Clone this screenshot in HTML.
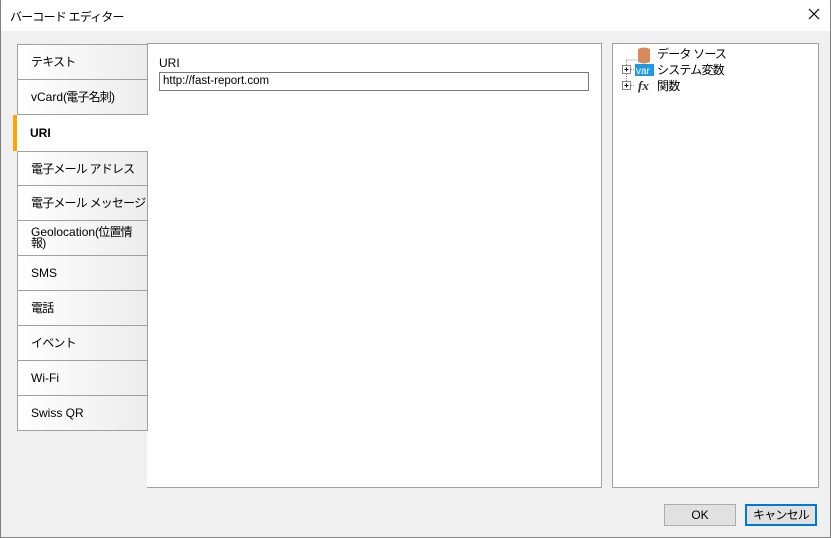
<!DOCTYPE html>
<html><head><meta charset="utf-8"><style>
*{box-sizing:border-box;margin:0;padding:0}
body{width:831px;height:538px;overflow:hidden;background:#f0f0f0;font-family:"Liberation Sans","Noto Sans CJK JP",sans-serif;font-size:12px;color:#000;position:relative}
.j{letter-spacing:-0.8px}
.win{position:absolute;left:0;top:0;width:831px;height:538px;border:1px solid #808080;border-top:1px solid #6e6e6e}
.title{position:absolute;left:1px;top:0;width:829px;height:31px;background:#fff}
.title span{position:absolute;left:9px;top:8px;font-size:12px}
.x{position:absolute;left:806px;top:7px}
.tab{position:absolute;left:17px;width:131px;height:36px;border:1px solid #a0a0a0;background:linear-gradient(to right,#fff,#ececec);padding-left:13px;display:flex;align-items:center;line-height:12px;white-space:nowrap}
.tab.w{white-space:normal}
.tab.sel{background:#fff;border:none;border-left:4px solid #ffa500;left:13px;width:135px;font-weight:bold;padding-left:13px}
.panel{position:absolute;left:147px;top:43px;width:455px;height:445px;background:#fff;border:1px solid #a0a0a0;border-left:none}
.lbl{position:absolute;left:12px;top:12px}
.inp{position:absolute;left:12px;top:28px;width:430px;height:19px;border:1px solid #7a7a7a;padding-left:3px;line-height:17px;font-size:11.5px}
.tree{position:absolute;left:612px;top:43px;width:207px;height:445px;background:#fff;border:1px solid #a0a0a0}
.btn{position:absolute;top:504px;width:72px;height:22px;background:#e1e1e1;border:1px solid #adadad;text-align:center;line-height:20px}
</style></head><body>
<div class="win"></div>
<div class="title"><span class="j">バーコード エディター</span>
<svg class="x" width="14" height="14" viewBox="0 0 14 14"><path d="M2 2L12 12M12 2L2 12" stroke="#000" stroke-width="1.2"/></svg></div>
<div class="panel"><div class="lbl">URI</div><div class="inp">http://fast-report.com</div></div>
<div class="tab j" style="top:44px">テキスト</div>
<div class="tab" style="top:79px">vCard<span class="j">(電子名刺)</span></div>
<div class="tab sel" style="top:115px;height:36px">URI</div>
<div class="tab j" style="top:151px">電子メール アドレス</div>
<div class="tab j" style="top:185px">電子メール メッセージ</div>
<div class="tab w" style="top:220px;line-height:11px"><span>Geolocation<span class="j">(位置情</span><br><span class="j">報)</span></span></div>
<div class="tab" style="top:255px">SMS</div>
<div class="tab j" style="top:290px">電話</div>
<div class="tab j" style="top:325px">イベント</div>
<div class="tab" style="top:360px">Wi-Fi</div>
<div class="tab" style="top:395px">Swiss QR</div>
<div class="tree">
<svg width="40" height="52" style="position:absolute;left:6px;top:0" viewBox="0 0 40 52">
<path d="M7.5 16V42M7.5 16H20M12 25.5H16M12 41.5H16" stroke="#888" stroke-dasharray="1 1" fill="none"/>
<rect x="3.5" y="21.5" width="8" height="8" fill="#fff" stroke="#888"/><path d="M5.5 25.5h4M7.5 23.5v4" stroke="#003"/>
<rect x="3.5" y="37.5" width="8" height="8" fill="#fff" stroke="#888"/><path d="M5.5 41.5h4M7.5 39.5v4" stroke="#003"/>
<path d="M19 5Q25 2 31 5V18Q25 21 19 18Z" fill="#d98a5a"/>
<rect x="16" y="20" width="19" height="12" fill="#1e9be0"/>
<text x="17" y="30" font-size="10" fill="#fff" font-family="Liberation Sans">var</text>
<text x="19" y="46" font-size="13" font-style="italic" font-weight="bold" font-family="Liberation Serif" fill="#333">fx</text>
</svg>
<div class="j" style="position:absolute;left:44px;top:1px">データ ソース</div>
<div class="j" style="position:absolute;left:44px;top:17px">システム変数</div>
<div class="j" style="position:absolute;left:44px;top:33px">関数</div>
</div>
<div class="btn" style="left:664px">OK</div>
<div class="btn j" style="left:745px;border:2px solid #0078d7;line-height:18px">キャンセル</div>
</body></html>
